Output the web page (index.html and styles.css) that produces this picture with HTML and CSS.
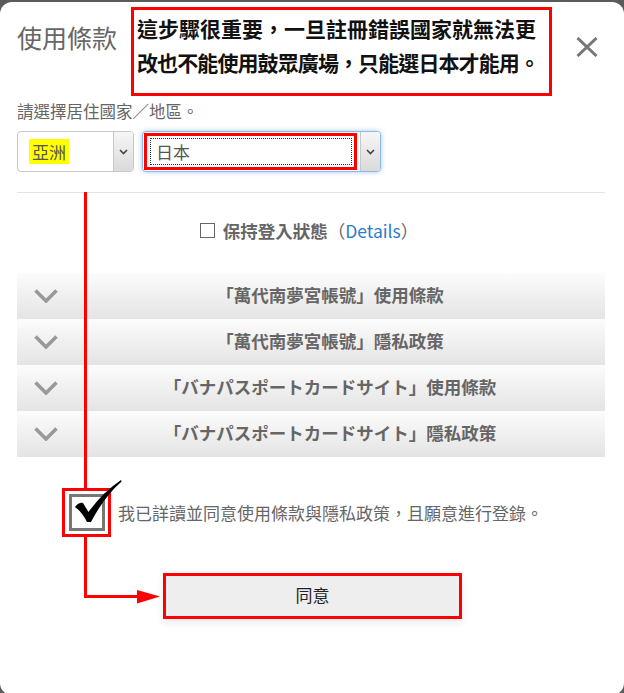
FILE: index.html
```html
<!DOCTYPE html>
<html lang="zh-Hant">
<head>
<meta charset="utf-8">
<title>使用條款</title>
<link rel="stylesheet" href="styles.css">
</head>
<body>
<div class="modal">
  <header class="head">
    <h1 class="title">使用條款</h1>
    <div class="note" lang="zh-TW">這步驟很重要，一旦註冊錯誤國家就無法更<br><span class="note-l2">改也不能使用鼓眾廣場，只能選日本才能用。</span></div>
    <button class="close" type="button" aria-label="close">
      <svg width="22" height="20" viewBox="0 0 22 20"><path d="M1.5 1 L20.5 19 M20.5 1 L1.5 19" stroke="#777" stroke-width="3" fill="none"/></svg>
    </button>
  </header>

  <p class="label">請選擇居住國家／地區。</p>

  <div class="selects">
    <div class="select s1">
      <div class="val"><span class="hl">亞洲</span></div>
      <div class="arr"><svg width="9" height="6" viewBox="0 0 9 6"><polyline points="1,1 4.5,4.5 8,1" fill="none" stroke="#444" stroke-width="1.6"/></svg></div>
    </div>
    <div class="select s2">
      <div class="val"><div class="redbox"><div class="dotted">日本</div></div></div>
      <div class="arr"><svg width="9" height="6" viewBox="0 0 9 6"><polyline points="1,1 4.5,4.5 8,1" fill="none" stroke="#444" stroke-width="1.6"/></svg></div>
    </div>
  </div>

  <div class="sep"></div>

  <div class="keep">
    <span class="cb"></span>
    <span class="keep-t">保持登入狀態</span><span class="paren">（</span><a class="details" href="#">Details</a><span class="paren">）</span>
  </div>

  <div class="acc">
    <div class="acc-row"><svg class="chev" width="24" height="14" viewBox="0 0 24 14"><polyline points="1.5,1.5 12,12 22.5,1.5" fill="none" stroke="#999" stroke-width="3.6"/></svg><span class="acc-t">「萬代南夢宮帳號」使用條款</span></div>
    <div class="acc-row"><svg class="chev" width="24" height="14" viewBox="0 0 24 14"><polyline points="1.5,1.5 12,12 22.5,1.5" fill="none" stroke="#999" stroke-width="3.6"/></svg><span class="acc-t">「萬代南夢宮帳號」隱私政策</span></div>
    <div class="acc-row"><svg class="chev" width="24" height="14" viewBox="0 0 24 14"><polyline points="1.5,1.5 12,12 22.5,1.5" fill="none" stroke="#999" stroke-width="3.6"/></svg><span class="acc-t">「バナパスポートカードサイト」使用條款</span></div>
    <div class="acc-row"><svg class="chev" width="24" height="14" viewBox="0 0 24 14"><polyline points="1.5,1.5 12,12 22.5,1.5" fill="none" stroke="#999" stroke-width="3.6"/></svg><span class="acc-t">「バナパスポートカードサイト」隱私政策</span></div>
  </div>

  <div class="agree">
    <div class="agree-box">
      <div class="big-cb"></div>
      <svg class="tick" width="50" height="44" viewBox="0 0 50 44"><path d="M2 27 Q6 22 10 23 L15.5 32 Q29 13 48 0 L48.6 1.6 Q31 17 18 42 L14 42 Q9 32 2 27 Z" fill="#000"/></svg>
    </div>
    <span class="agree-t">我已詳讀並同意使用條款與隱私政策，且願意進行登錄。</span>
  </div>

  <button class="agree-btn" type="button">同意</button>

  <svg class="arrows" width="624" height="693" viewBox="0 0 624 693">
    <rect x="84" y="192" width="3" height="296" fill="#f00"/>
    <rect x="84" y="537" width="3" height="61" fill="#f00"/>
    <rect x="84" y="595" width="55" height="3" fill="#f00"/>
    <polygon points="137,590 160,596.5 137,603.5" fill="#f00"/>
  </svg>
</div>
</body>
</html>
```

FILE: styles.css
```css
html, body {
  margin: 0;
  padding: 0;
}
body {
  background: #5b5b5b;
  padding-top: 2px;
  height: 691px;
  overflow: hidden;
  font-family: "Noto Sans CJK JP", "Noto Sans CJK TC", sans-serif;
  color: #666;
}
.modal {
  position: relative;
  background: #fff;
  height: 693px;
  border-radius: 12px;
  padding: 0 19px 0 17px;
  box-sizing: border-box;
}
.head {
  display: flex;
  align-items: flex-start;
  height: 93px;
}
.title {
  margin: 23px 0 0 0;
  font-size: 25px;
  line-height: 25px;
  font-weight: 400;
  color: #666;
  white-space: nowrap;
}
.note {
  margin: 5px 0 0 14px;
  width: 421px;
  height: 89px;
  box-sizing: border-box;
  border: 3px solid #f00;
  padding: 1px 0 0 3px;
  font-family: "Noto Sans CJK TC", sans-serif;
  font-size: 21px;
  line-height: 34px;
  font-weight: 700;
  color: #111;
  white-space: nowrap;
}
.note-l2 {
  letter-spacing: -0.9px;
}
.close {
  margin: 35px 7px 0 auto;
  padding: 0;
  border: 0;
  background: none;
  width: 22px;
  height: 20px;
  display: block;
}
.close svg {
  display: block;
}
.label {
  margin: 6px 0 0;
  font-size: 16.5px;
  line-height: 20px;
  color: #666;
}
.selects {
  display: flex;
  gap: 8px;
  margin-top: 10px;
  height: 41px;
}
.select {
  display: flex;
  box-sizing: border-box;
  height: 41px;
  border: 1px solid #c8c8c8;
  border-radius: 4px;
  overflow: hidden;
  background: #fff;
}
.s1 {
  width: 117px;
}
.s2 {
  width: 239px;
  border-color: #8fb9e3;
  box-shadow: 0 0 5px rgba(90, 155, 230, 0.55);
  overflow: visible;
}
.val {
  flex: 1;
  display: flex;
  align-items: center;
  min-width: 0;
}
.s1 .val {
  padding-left: 11px;
}
.hl {
  display: inline-block;
  background: #ffff00;
  padding: 0 3px;
  font-size: 17px;
  line-height: 25px;
  color: #555;
}
.arr {
  width: 19px;
  border-left: 1px solid #c8c8c8;
  background: linear-gradient(#f6f6f6, #dadada);
  display: flex;
  align-items: center;
  justify-content: center;
}
.s2 .arr {
  border-radius: 0 3px 3px 0;
}
.redbox {
  box-sizing: border-box;
  width: 213px;
  height: 37px;
  margin-left: 1px;
  border: 3px solid #f00;
  padding: 2px 2px 2px 3px;
}
.dotted {
  box-sizing: border-box;
  height: 27px;
  border: 1px dotted #333;
  padding-left: 5px;
  font-size: 17px;
  line-height: 25px;
  color: #555;
}
.sep {
  margin-top: 20px;
  height: 1px;
  background: #e5e5e5;
}
.keep {
  margin-top: 26px;
  height: 24px;
  display: flex;
  align-items: center;
  justify-content: center;
  font-size: 17.5px;
  line-height: 24px;
  padding-right: 4px;
}
.cb {
  width: 15px;
  height: 15px;
  box-sizing: border-box;
  border: 1px solid #666;
  margin-right: 8px;
  margin-top: -1px;
}
.keep-t {
  font-weight: 700;
  color: #666;
}
.paren {
  color: #666;
}
.details {
  color: #2b7bcc;
  text-decoration: none;
}
.acc {
  margin-top: 30px;
}
.acc-row {
  height: 46px;
  display: flex;
  align-items: center;
  background: linear-gradient(#fcfcfc, #e4e4e4);
}
.chev {
  margin-left: 17px;
  flex: none;
}
.acc-t {
  flex: 1;
  text-align: center;
  font-size: 17.5px;
  font-weight: 700;
  color: #666;
  padding: 0 3px 3px 0;
  white-space: nowrap;
}
.agree {
  margin-top: 31px;
  padding-left: 45px;
  display: flex;
  align-items: center;
  height: 49px;
}
.agree-box {
  position: relative;
  width: 49px;
  height: 49px;
  box-sizing: border-box;
  border: 3px solid #f00;
  display: flex;
  align-items: center;
  justify-content: center;
  flex: none;
}
.big-cb {
  width: 36px;
  height: 37px;
  box-sizing: border-box;
  border: 3px solid #777;
  background: #fff;
}
.tick {
  position: absolute;
  left: 8px;
  top: -11px;
}
.agree-t {
  margin-left: 7px;
  font-size: 17px;
  line-height: 24px;
  color: #666;
  white-space: nowrap;
  margin-top: 0;
}
.agree-btn {
  display: block;
  margin: 36px 0 0 146px;
  width: 299px;
  height: 46px;
  box-sizing: border-box;
  border: 3px solid #f00;
  background: #eee;
  font-family: "Noto Sans CJK JP", "Noto Sans CJK TC", sans-serif;
  font-size: 17px;
  color: #222;
  padding: 0 0 3px;
  box-shadow: 0 4px 8px rgba(0, 0, 0, 0.08);
}
.arrows {
  position: absolute;
  left: 0;
  top: -2px;
  pointer-events: none;
}
```
